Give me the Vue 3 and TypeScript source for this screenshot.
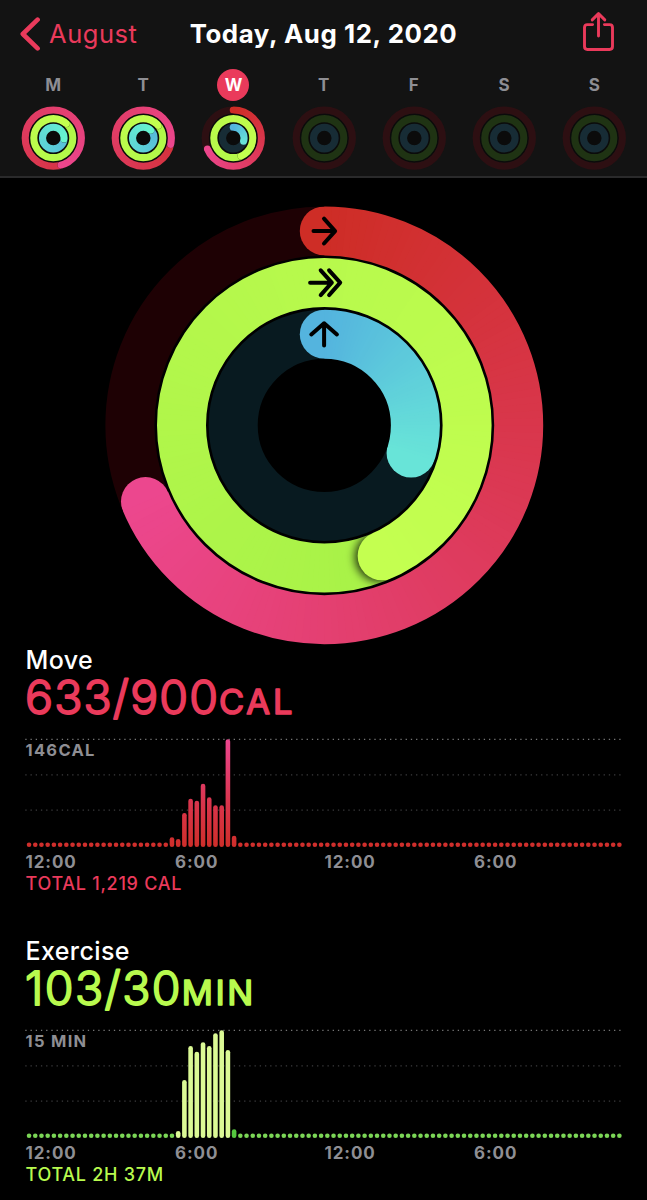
<script setup lang="ts">
type RGB = [number, number, number]
interface Ring { r: number; end: number; from: RGB; to: RGB; track: string }
interface Segment { d: string; color: string }
interface Day { label: string; rings: Ring[]; today?: boolean }

const RED: [RGB, RGB] = [[206, 45, 38], [236, 71, 142]]
const GREEN: [RGB, RGB] = [[156, 236, 68], [196, 255, 80]]
const GREEN_MINI: [RGB, RGB] = [[172, 245, 72], [196, 255, 80]]
const BLUE: [RGB, RGB] = [[84, 180, 222], [104, 228, 216]]
const BLUE_FULL: [RGB, RGB] = [[84, 176, 222], [104, 245, 208]]

const point = (r: number, deg: number): [number, number] => {
  const a = (deg * Math.PI) / 180
  return [r * Math.sin(a), -r * Math.cos(a)]
}
const mix = (a: RGB, b: RGB, t: number): string =>
  `rgb(${a.map((v, i) => Math.round(v + (b[i] - v) * t)).join(',')})`

// Each slice runs a little under the next one so that no seam shows between them.
function segments(ring: Ring, start: number, stop: number): Segment[] {
  const out: Segment[] = []
  const overlap = 90 / ring.r
  for (let a = start; a < stop; a += 2) {
    const b = Math.min(a + 2 + overlap, ring.end)
    const [x1, y1] = point(ring.r, a)
    const [x2, y2] = point(ring.r, b)
    out.push({
      d: `M${x1.toFixed(3)} ${y1.toFixed(3)}A${ring.r} ${ring.r} 0 0 1 ${x2.toFixed(3)} ${y2.toFixed(3)}`,
      color: mix(ring.from, ring.to, a / ring.end),
    })
  }
  return out
}
const headLength = 24
const body = (ring: Ring) => segments(ring, Math.max(0, ring.end - 360), Math.max(0, ring.end - headLength))
const head = (ring: Ring) => segments(ring, Math.max(0, ring.end - headLength), ring.end)

const mini = (red: number, green: number, blue: number): Ring[] => [
  { r: 28.1, end: red, from: RED[0], to: RED[1], track: '#2d0f12' },
  { r: 19.5, end: green, from: GREEN_MINI[0], to: GREEN_MINI[1], track: '#1f3313' },
  {
    r: 10.8, end: blue,
    from: blue > 360 ? BLUE_FULL[0] : BLUE[0],
    to: blue > 360 ? BLUE_FULL[1] : BLUE[1],
    track: '#172c35',
  },
]

const days: Day[] = [
  { label: 'M', rings: mini(524, 402, 455) },
  { label: 'T', rings: mini(463, 410, 403) },
  { label: 'W', rings: mini(247, 516, 107), today: true },
  { label: 'T', rings: mini(0, 0, 0) },
  { label: 'F', rings: mini(0, 0, 0) },
  { label: 'S', rings: mini(0, 0, 0) },
  { label: 'S', rings: mini(0, 0, 0) },
]

const rings: Ring[] = [
  { r: 194.4, end: 246.9, from: RED[0], to: RED[1], track: '#1e0104' },
  { r: 142.8, end: 516.1, from: GREEN[0], to: GREEN[1], track: '#122004' },
  { r: 91.1, end: 107.7, from: BLUE[0], to: BLUE[1], track: '#081a20' },
]

interface Metric {
  key: string; title: string; value: string; unit: string; unitX: number
  valueLength: number; unitLength: number; max: string; total: string
  bars: Record<number, number>
}
const metrics: Metric[] = [
  {
    key: 'move', title: 'Move', value: '633/900', unit: 'CAL', unitX: 194,
    valueLength: 193, unitLength: 73.5, max: '146CAL', total: 'TOTAL 1,219 CAL',
    bars: { 23: 9.7, 24: 8, 25: 34, 26: 48.3, 27: 46.3, 28: 63.3, 29: 49.7, 30: 41.7, 31: 41.7, 32: 107.7, 33: 11.3 },
  },
  {
    key: 'exercise', title: 'Exercise', value: '103/30', unit: 'MIN', unitX: 156.8,
    valueLength: 155.5, unitLength: 71.5, max: '15 MIN', total: 'TOTAL 2H 37M',
    bars: { 24: 7, 25: 58, 26: 92, 27: 86.3, 28: 95.7, 29: 92, 30: 104.7, 31: 107.7, 32: 88, 33: 8.7 },
  },
]
const slots = Array.from({ length: 96 }, (_, i) => i)
const times = ['12:00', '6:00', '12:00', '6:00']
const barHeight = (m: Metric, i: number) => m.bars[i] ?? 4.6
const barFill = (m: Metric, i: number) => {
  if (m.key === 'move') return 'url(#moveFill)'
  if (m.bars[i] === undefined) return '#7bd656'
  return i === 33 ? '#55c83f' : '#dbf995'
}
</script>

<template>
  <main class="screen">
    <header class="header">
      <nav class="nav">
        <a class="back">
          <svg width="20" height="34" viewBox="0 0 20 34">
            <path d="M17.6 2.6 2.8 17 17.6 31.4" />
          </svg>
          <span>August</span>
        </a>
        <h1 class="title">Today, Aug 12, 2020</h1>
        <svg class="share" width="34" height="42" viewBox="0 0 34 42">
          <path d="M11.6 13.6H6.4Q3.5 13.6 3.5 16.5V35.6Q3.5 38.5 6.4 38.5H28.6Q31.5 38.5 31.5 35.6V16.5Q31.5 13.6 28.6 13.6H23.4M17.5 25V3.2M11.2 8.9 17.5 2.6 23.8 8.9" />
        </svg>
      </nav>
      <div class="week">
        <div v-for="(day, i) in days" :key="i" class="day">
          <span class="letter" :class="{ today: day.today }">{{ day.label }}</span>
          <svg width="66" height="66" viewBox="-33.3 -33.1 66 66">
            <defs>
              <filter :id="`soft${i}`" x="-50%" y="-50%" width="200%" height="200%">
                <feGaussianBlur stdDeviation="0.6" />
              </filter>
              <mask v-for="(ring, n) in day.rings" :id="`mini${i}-${n}`" :key="n" maskUnits="userSpaceOnUse" x="-34" y="-34" width="68" height="68">
                <circle :r="ring.r" fill="none" stroke="#fff" stroke-width="7.1" />
              </mask>
            </defs>
            <circle r="24.6" fill="#0b0b0b" />
            <g v-for="(ring, n) in day.rings" :key="ring.r" fill="none" stroke-width="9" :mask="`url(#mini${i}-${n})`">
              <circle :r="ring.r" :stroke="ring.track" />
              <template v-if="ring.end">
                <circle v-if="ring.end < 360" :cy="-ring.r" r="3.55" :fill="mix(ring.from, ring.to, 0)" />
                <path v-for="(s, k) in body(ring)" :key="k" :d="s.d" :stroke="s.color" />
                <circle
                  v-if="ring.end > 360" :cx="point(ring.r, ring.end)[0]" :cy="point(ring.r, ring.end)[1]"
                  r="3.7" fill="#000" fill-opacity="0.6" :filter="`url(#soft${i})`"
                />
                <circle :cx="point(ring.r, ring.end)[0]" :cy="point(ring.r, ring.end)[1]" r="3.55" :fill="mix(ring.from, ring.to, 1)" />
                <path v-for="(s, k) in head(ring)" :key="'h' + k" :d="s.d" :stroke="s.color" />
              </template>
            </g>
          </svg>
        </div>
      </div>
    </header>

    <svg class="rings" width="440" height="440" viewBox="-220.3 -220.3 440 440">
      <defs>
        <filter id="shadow" x="-50%" y="-50%" width="200%" height="200%">
          <feGaussianBlur stdDeviation="5" />
        </filter>
        <mask v-for="(ring, n) in rings" :id="`band${n}`" :key="n" maskUnits="userSpaceOnUse" x="-221" y="-221" width="442" height="442">
          <circle :r="ring.r" fill="none" stroke="#fff" stroke-width="49" />
        </mask>
      </defs>
      <g v-for="(ring, n) in rings" :key="ring.r" fill="none" stroke-width="52" :mask="`url(#band${n})`">
        <circle :r="ring.r" :stroke="ring.track" />
        <circle v-if="ring.end < 360" :cy="-ring.r" r="24.5" :fill="mix(ring.from, ring.to, 0)" />
        <path v-for="(s, k) in body(ring)" :key="k" :d="s.d" :stroke="s.color" />
        <circle
          v-if="ring.end > 360" :cx="point(ring.r, ring.end + 1)[0]" :cy="point(ring.r, ring.end + 1)[1]"
          r="24.5" fill="#000" fill-opacity="0.85" filter="url(#shadow)"
        />
        <circle :cx="point(ring.r, ring.end)[0]" :cy="point(ring.r, ring.end)[1]" r="24.5" :fill="mix(ring.from, ring.to, 1)" />
        <path v-for="(s, k) in head(ring)" :key="'h' + k" :d="s.d" :stroke="s.color" />
      </g>
      <g class="arrows">
        <path d="M-10.8-194.2H10.5M-.3-206.6 10.8-194.2-.3-181.8" />
        <path d="M-14.2-142.6H7.5M-3.6-155 7.5-142.6-3.6-130.2M4.8-155 15.9-142.6 4.8-130.2" />
        <path d="M-.2-79.8V-102M-13-90.8-.2-102 12.6-90.8" />
      </g>
    </svg>

    <section v-for="m in metrics" :key="m.key" class="metric" :class="m.key">
      <h2>{{ m.title }}</h2>
      <svg class="value" width="300" height="50" viewBox="0 0 300 50">
        <text x="0" y="39" class="number" :textLength="m.valueLength">{{ m.value }}</text>
        <text :x="m.unitX" y="39" class="unit" :textLength="m.unitLength">{{ m.unit }}</text>
      </svg>
      <div class="chart">
        <svg width="600" height="112" viewBox="0 0 600 112">
          <defs>
            <linearGradient id="moveFill" gradientUnits="userSpaceOnUse" x1="0" y1="111" x2="0" y2="3">
              <stop offset="0" stop-color="#cf2e2a" />
              <stop offset="0.4" stop-color="#d9344b" />
              <stop offset="1" stop-color="#ec4690" />
            </linearGradient>
          </defs>
          <path class="grid strong" d="M.3 3.4H597" />
          <path class="grid" d="M.3 38.9H597M.3 74.2H597" />
          <rect
            v-for="i in slots" :key="i" :x="1.75 + i * 6.214" :y="111 - barHeight(m, i)"
            width="4.6" :height="barHeight(m, i)" rx="2.3" :fill="barFill(m, i)"
          />
        </svg>
        <span class="max">{{ m.max }}</span>
      </div>
      <div class="times"><span v-for="(t, i) in times" :key="i">{{ t }}</span></div>
      <p class="total">{{ m.total }}</p>
    </section>
  </main>
</template>

<style>
html, body { background: #000; }
</style>

<style scoped>
.screen {
  width: 647px;
  height: 1200px;
  overflow: hidden;
  background: #000;
  color: #fff;
  font-family: Inter, "Liberation Sans", sans-serif;
}
.header {
  box-sizing: border-box;
  height: 178px;
  background: #131313;
  border-bottom: 2px solid #2a2a2b;
}
.nav {
  display: grid;
  grid-template-columns: 170px 1fr 170px;
  align-items: center;
  height: 67px;
}
.back {
  display: flex;
  align-items: center;
  gap: 9px;
  padding-left: 20px;
  color: #ea3a5b;
  font-size: 25.5px;
  letter-spacing: 0.55px;
}
.back svg {
  fill: none;
  stroke: #ea3a5b;
  stroke-width: 4.6;
  stroke-linecap: round;
  stroke-linejoin: round;
}
.title {
  margin: 0;
  font-size: 25.8px;
  font-weight: 700;
  letter-spacing: 0.58px;
  text-align: center;
  white-space: nowrap;
}
.share {
  justify-self: end;
  margin: -3px 32px 0 0;
  fill: none;
  stroke: #ea3a5b;
  stroke-width: 2.9;
  stroke-linecap: round;
  stroke-linejoin: round;
}
.week {
  display: grid;
  grid-template-columns: repeat(7, 90.2px);
  padding-left: 8px;
}
.day {
  display: flex;
  flex-direction: column;
  align-items: center;
  gap: 4px;
  padding-top: 2px;
}
.day svg { display: block; }
.letter {
  width: 32px;
  height: 32px;
  border-radius: 50%;
  color: #8e8e93;
  font-size: 17px;
  font-weight: 700;
  line-height: 32px;
  text-align: center;
}
.today { background: #ea3a5b; color: #fff; }
.rings { display: block; margin: 27px 0 0 104px; }
.arrows {
  fill: none;
  stroke: #000;
  stroke-width: 4;
  stroke-linecap: round;
  stroke-linejoin: round;
}
.metric { height: 291px; padding-left: 25px; }
.move { color: #ea3a5b; fill: #ea3a5b; stroke: #ea3a5b; }
.exercise { color: #b8fa4e; fill: #b8fa4e; stroke: #b8fa4e; }
h2 {
  margin: 0;
  height: 30px;
  padding-left: 0.5px;
  color: #fff;
  font-size: 25px;
  font-weight: 500;
  letter-spacing: 0.4px;
  line-height: 30px;
}
.value { display: block; overflow: visible; }
.value text { stroke-linejoin: round; }
.number { font-size: 46.5px; font-weight: 300; stroke-width: 1.9; }
.unit { font-size: 34.5px; font-weight: 400; stroke-width: 1.6; }
.chart { position: relative; height: 112px; margin-top: 11px; }
.chart svg { display: block; stroke: none; }
.chart .grid { stroke: #3c3c3e; stroke-width: 1.2; stroke-dasharray: 1.3 3.91; }
.chart .strong { stroke: #777; }
.max {
  position: absolute;
  top: 4px;
  left: 0.5px;
  color: #8e8e93;
  font-size: 16.5px;
  font-weight: 700;
  letter-spacing: 1.3px;
  line-height: 20px;
}
.times {
  display: grid;
  grid-template-columns: repeat(4, 149.5px);
  height: 25px;
  padding-left: 0.5px;
  color: #8e8e93;
  font-size: 17px;
  font-weight: 700;
  letter-spacing: 0.9px;
  line-height: 28px;
}
.total {
  margin: 0;
  padding-left: 0.5px;
  font-size: 18px;
  font-weight: 500;
  letter-spacing: 0.72px;
  line-height: 22px;
}
</style>
